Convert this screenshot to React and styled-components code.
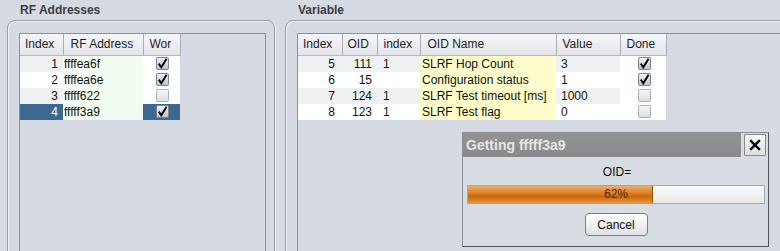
import React from "react";
import styled, { createGlobalStyle } from "styled-components";

const Global = createGlobalStyle`
  html, body { margin: 0; padding: 0; }
  body {
    background: #d6dae2;
    font-family: "Liberation Sans", Arial, sans-serif;
    font-size: 12px;
    color: #111;
  }
`;

const Root = styled.div`
  position: relative;
  display: flex;
  gap: 10px;
  height: 251px;
  width: 780px;
  padding-left: 7px;
  box-sizing: border-box;
  overflow: hidden;
`;

const Group = styled.section`
  flex: none;
  width: ${(p) => p.$width}px;
  display: flex;
  flex-direction: column;
`;

const GroupTitle = styled.div`
  height: 20px;
  line-height: 20px;
  padding-left: 13px;
  font-weight: bold;
  font-size: 12px;
  color: #3a3d42;
`;

const Frame = styled.div`
  flex: none;
  height: 300px;
  border: 1px solid #9a9ea6;
  border-radius: 8px 8px 0 0;
  box-shadow: inset 1px 1px 0 #eef0f4, 1px 1px 0 #eef0f4;
  padding: 12px ${(p) => p.$padRight}px 0 11px;
  box-sizing: border-box;
`;

const Pane = styled.div`
  height: 280px;
  border: 1px solid #8c9098;
  background: #d6dae2;
  box-sizing: border-box;
`;

const Table = styled.table`
  border-collapse: collapse;
  table-layout: fixed;
  width: ${(p) => p.$width}px;
`;

const HeadCell = styled.th`
  width: ${(p) => p.$w}px;
  height: 21px;
  padding: 0 0 0 ${(p) => p.$pad ?? 6}px;
  box-sizing: border-box;
  text-align: left;
  font-weight: normal;
  font-size: 12px;
  color: #1e1e1e;
  background: linear-gradient(#f5f6f8, #e3e5e9);
  border-right: 1px solid #aaaeb6;
  border-bottom: 1px solid #b6bac2;
  white-space: nowrap;
  overflow: hidden;
`;

const Cell = styled.td`
  height: 16px;
  line-height: 16px;
  padding: 0 ${(p) => (p.$align === "right" ? p.$pad ?? 5 : 0)}px 0
    ${(p) => (p.$align === "right" ? 0 : p.$pad ?? 2)}px;
  text-align: ${(p) => (p.$align === "center" ? "center" : p.$align || "left")};
  background: ${(p) => (p.$selected ? "#3d6991" : p.$bg || "#ffffff")};
  color: ${(p) => (p.$selected ? "#ffffff" : "#111")};
  white-space: nowrap;
  overflow: hidden;
  font-size: 12px;
  vertical-align: middle;
`;

const Box = styled.span`
  display: inline-block;
  width: 13px;
  height: 13px;
  box-sizing: border-box;
  border: 1px solid ${(p) => (p.$checked ? "#7d8592" : "#aab0b8")};
  border-radius: 2px;
  background: ${(p) =>
    p.$checked
      ? "linear-gradient(#eef1f5, #bcc4cf)"
      : "linear-gradient(#f7f7f8, #dcdfe3)"};
  vertical-align: middle;
  position: relative;
  top: -1px;
  svg { display: block; }
`;

const Check = ({ checked }) => (
  <Box $checked={checked}>
    {checked && (
      <svg width="11" height="11" viewBox="0 0 11 11">
        <path d="M1.8 5.6 L4.3 9.3 L9.6 0.8" fill="none" stroke="#000" strokeWidth="1.9" strokeLinejoin="miter" />
      </svg>
    )}
  </Box>
);

const Dialog = styled.div`
  position: absolute;
  left: 462px;
  top: 132px;
  width: 307px;
  height: 115px;
  box-sizing: border-box;
  border: 1px solid #8a8e94;
  border-right-color: #4e5258;
  border-bottom-color: #4e5258;
  background: #d8dce3;
  display: flex;
  flex-direction: column;
`;

const TitleRow = styled.div`
  display: flex;
  align-items: flex-start;
  gap: 3px;
  padding-right: 2px;
  height: 24px;
`;

const TitleBar = styled.div`
  flex: 1;
  height: 24px;
  line-height: 24px;
  padding-left: 3px;
  background: linear-gradient(#939393, #8a8a8a);
  color: #e6e6e6;
  font-weight: bold;
  font-size: 14px;
`;

const CloseButton = styled.button`
  width: 22px;
  height: 22px;
  margin-top: 1px;
  padding: 0;
  border: 1px solid #8a8a8a;
  border-radius: 1px;
  background: linear-gradient(#f8f8f8, #dedede);
  display: flex;
  align-items: center;
  justify-content: center;
  svg { display: block; }
`;

const DialogBody = styled.div`
  display: flex;
  flex-direction: column;
  align-items: center;
  padding: 0 3px 0 4px;
`;

const Label = styled.div`
  margin-top: 8px;
  height: 14px;
  line-height: 14px;
  font-size: 12px;
  color: #111;
  padding-left: 2px;
`;

const Progress = styled.div`
  margin-top: 6px;
  width: 298px;
  height: 19px;
  box-sizing: border-box;
  border: 1px solid #a4a6aa;
  background: linear-gradient(#fafafa, #e9e9e9);
  position: relative;
  align-self: flex-start;
`;

const Fill = styled.div`
  height: 100%;
  background: linear-gradient(#efad68 0%, #dc7c20 45%, #c8660c 60%, #e5953f 100%);
  border-right: 1px solid #9a5210;
`;

const ProgressText = styled.span`
  position: absolute;
  inset: 0;
  text-align: center;
  line-height: 17px;
  font-size: 12px;
  color: #4a2a08;
`;

const Button = styled.button`
  margin-top: 9px;
  width: 63px;
  height: 23px;
  border: 1px solid #7c7e82;
  border-radius: 4px;
  background: linear-gradient(#ffffff, #e1e2e5);
  font-family: "Liberation Sans", Arial, sans-serif;
  font-size: 12px;
  color: #111;
  padding: 0;
`;

const rfRows = [
  { i: 1, addr: "ffffea6f", w: true },
  { i: 2, addr: "ffffea6e", w: true },
  { i: 3, addr: "fffff622", w: false },
  { i: 4, addr: "fffff3a9", w: true, sel: true },
];

const varRows = [
  { i: 5, oid: 111, idx: "1", name: "SLRF Hop Count", val: "3", done: true },
  { i: 6, oid: 15, idx: "", name: "Configuration status", val: "1", done: true },
  { i: 7, oid: 124, idx: "1", name: "SLRF Test timeout [ms]", val: "1000", done: false },
  { i: 8, oid: 123, idx: "1", name: "SLRF Test flag", val: "0", done: false },
];

const stripe = (n) => (n % 2 === 0 ? "#f0f1f2" : "#ffffff");

export default function App() {
  const pct = 62;
  return (
    <>
      <Global />
      <Root>
        <Group $width={268}>
          <GroupTitle>RF Addresses</GroupTitle>
          <Frame $padRight={8}>
            <Pane>
              <Table $width={160}>
                <thead>
                  <tr>
                    <HeadCell $w={43} $pad={5}>Index</HeadCell>
                    <HeadCell $w={80} $pad={7}>RF Address</HeadCell>
                    <HeadCell $w={37} $pad={6}>Wor</HeadCell>
                  </tr>
                </thead>
                <tbody>
                  {rfRows.map((r, n) => (
                    <tr key={r.i}>
                      <Cell $align="right" $pad={5} $bg={stripe(n)} $selected={r.sel}>{r.i}</Cell>
                      <Cell $pad={1} $bg="#f3fcf1">{r.addr}</Cell>
                      <Cell $align="center" $selected={r.sel}><Check checked={r.w} /></Cell>
                    </tr>
                  ))}
                </tbody>
              </Table>
            </Pane>
          </Frame>
        </Group>
        <Group $width={560}>
          <GroupTitle>Variable</GroupTitle>
          <Frame $padRight={8}>
            <Pane>
              <Table $width={368}>
                <thead>
                  <tr>
                    <HeadCell $w={44} $pad={5}>Index</HeadCell>
                    <HeadCell $w={35} $pad={5}>OID</HeadCell>
                    <HeadCell $w={43} $pad={6}>index</HeadCell>
                    <HeadCell $w={136} $pad={7}>OID Name</HeadCell>
                    <HeadCell $w={64} $pad={6}>Value</HeadCell>
                    <HeadCell $w={46} $pad={6}>Done</HeadCell>
                  </tr>
                </thead>
                <tbody>
                  {varRows.map((r, n) => (
                    <tr key={r.i}>
                      <Cell $align="right" $pad={7} $bg={stripe(n)}>{r.i}</Cell>
                      <Cell $align="right" $pad={5} $bg={stripe(n)}>{r.oid}</Cell>
                      <Cell $pad={6} $bg={stripe(n)}>{r.idx}</Cell>
                      <Cell $pad={2} $bg="#fdfdcb">{r.name}</Cell>
                      <Cell $pad={5} $bg={stripe(n)}>{r.val}</Cell>
                      <Cell $align="center"><Check checked={r.done} /></Cell>
                    </tr>
                  ))}
                </tbody>
              </Table>
            </Pane>
          </Frame>
        </Group>
        <Dialog>
          <TitleRow>
            <TitleBar>Getting fffff3a9</TitleBar>
            <CloseButton aria-label="Close">
              <svg width="12" height="12" viewBox="0 0 12 12">
                <path d="M2 2 L10 10 M10 2 L2 10" stroke="#000" strokeWidth="2.4" strokeLinecap="square" />
              </svg>
            </CloseButton>
          </TitleRow>
          <DialogBody>
            <Label>OID=</Label>
            <Progress>
              <Fill style={{ width: `${pct}%` }} />
              <ProgressText>{pct}%</ProgressText>
            </Progress>
            <Button>Cancel</Button>
          </DialogBody>
        </Dialog>
      </Root>
    </>
  );
}
